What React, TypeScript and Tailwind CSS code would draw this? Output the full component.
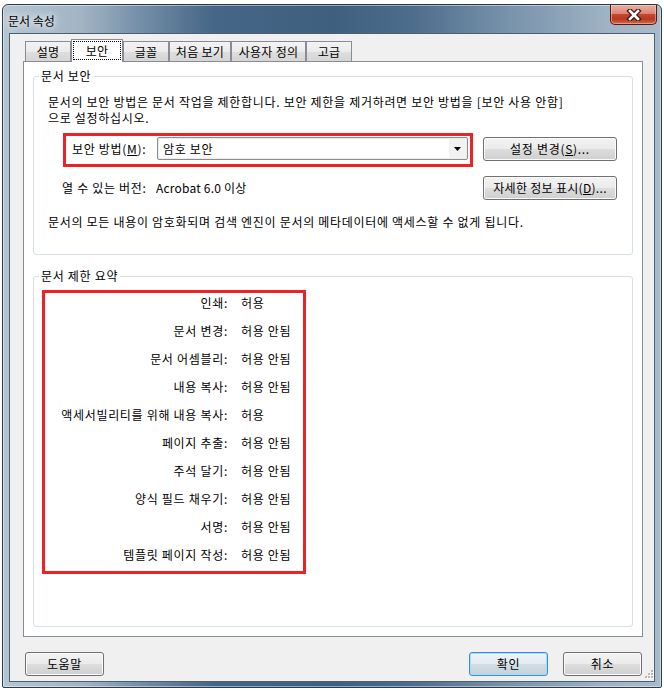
import React from 'react';

const rows: [string, string][] = [
  ['인쇄:', '허용'],
  ['문서 변경:', '허용 안됨'],
  ['문서 어셈블리:', '허용 안됨'],
  ['내용 복사:', '허용 안됨'],
  ['액세서빌리티를 위해 내용 복사:', '허용'],
  ['페이지 추출:', '허용 안됨'],
  ['주석 달기:', '허용 안됨'],
  ['양식 필드 채우기:', '허용 안됨'],
  ['서명:', '허용 안됨'],
  ['템플릿 페이지 작성:', '허용 안됨'],
];

const tabs = [
  { label: '설명', w: 'w-[46px]' },
  { label: '보안', w: 'w-[52px]', active: true },
  { label: '글꼴', w: 'w-[46px]' },
  { label: '처음 보기', w: 'w-[62px]' },
  { label: '사용자 정의', w: 'w-[75px]' },
  { label: '고급', w: 'w-[46px]' },
];

const Button: React.FC<{ children: React.ReactNode; className?: string; isDefault?: boolean }> = ({
  children,
  className = '',
  isDefault = false,
}) => (
  <div
    className={`flex h-[24px] items-center justify-center rounded-[3px] border leading-none ${
      isDefault
        ? 'border-[#3c8fd0] bg-[linear-gradient(180deg,#eef4f8_0%,#e3ecf2_48%,#d2dde5_52%,#c5d2db_100%)] shadow-[inset_0_0_0_1px_#a4dcf8]'
        : 'border-[#707070] bg-[linear-gradient(180deg,#f3f3f3_0%,#ebebeb_48%,#dddddd_52%,#cfcfcf_100%)] shadow-[inset_0_0_0_1px_#fbfbfb]'
    } ${className}`}
  >
    {children}
  </div>
);

export default function App() {
  return (
    <div className="min-h-screen bg-white pt-[4px] pl-[2px] font-['Noto_Sans_CJK_KR',sans-serif] text-[12px] tracking-[0.7px] text-black">
      <div className="flex h-[684px] w-[660px] flex-col rounded-t-[6px] rounded-b-[2px] border border-[#2a3b4d] bg-[linear-gradient(90deg,#b6c5d2_0%,#a1b4c4_12%,#6f8aa4_22%,#456686_32%,#3f5f7f_50%,#4d6d8c_62%,#7b95ad_78%,#9fb3c4_92%,#a8bbca_100%)] shadow-[inset_0_0_0_1px_rgba(255,255,255,0.45)]">
        {/* title bar */}
        <div className="flex h-[28px] items-start justify-between">
          <div className="pl-[5px] pt-[8px] leading-[16px] tracking-normal [text-shadow:0_0_6px_#ffffff,0_0_10px_#ffffff]">문서 속성</div>
          <div className="mr-[4px] flex h-[20px] w-[47px] items-center justify-center rounded-b-[5px] border border-t-0 border-[#571a12] bg-[linear-gradient(180deg,#eab0a4_0%,#dc8374_45%,#c6452f_50%,#b73a22_75%,#d66b4a_100%)] shadow-[inset_0_0_0_1px_rgba(255,220,210,0.45)]">
            <svg width="16" height="12" viewBox="0 0 16 12">
              <path d="M4 2 L12 10 M12 2 L4 10" stroke="#3b1510" strokeWidth="5" strokeLinecap="square" />
              <path d="M4 2 L12 10 M12 2 L4 10" stroke="#ffffff" strokeWidth="2.6" strokeLinecap="square" />
            </svg>
          </div>
        </div>

        {/* client area */}
        <div className="mx-[6px] mb-[5px] flex flex-1 flex-col border border-[#4b5e72] bg-[#f0f0f0] pl-[13px] pt-[5px]">
          {/* tabs */}
          <div className="mr-[11px] flex h-[22px] items-end pl-[2px] tracking-[0.3px]">
            {tabs.map(t =>
              t.active ? (
                <div
                  key={t.label}
                  className={`${t.w} relative z-10 -mb-px h-[23px] border border-b-0 border-[#898c95] bg-white p-[1px] pb-[2px]`}
                >
                  <div className="flex h-full items-start justify-center border border-dotted border-black pt-[1px] leading-[16px]">
                    {t.label}
                  </div>
                </div>
              ) : (
                <div
                  key={t.label}
                  className={`${t.w} flex h-[20px] items-center justify-center border border-b-0 border-[#898c95] bg-[linear-gradient(180deg,#f3f3f3_0%,#ebebeb_50%,#dedede_52%,#d5d5d5_100%)] pt-[1px] leading-[16px]`}
                >
                  {t.label}
                </div>
              ),
            )}
          </div>

          {/* panel */}
          <div className="mr-[11px] flex h-[576px] flex-col border border-[#898c95] bg-white px-[9px] pb-[9px] pt-[6px]">
            <fieldset className="rounded-[3px] border border-[#d5dfe5] pb-[24px]">
              <legend className="ml-[5px] px-[2px] leading-[16px]">문서 보안</legend>
              <div className="mt-[10px] pl-[14px] leading-[16px]">
                <div>문서의 보안 방법은 문서 작업을 제한합니다. 보안 제한을 제거하려면 보안 방법을 [보안 사용 안함]</div>
                <div>으로 설정하십시오.</div>
              </div>
              <div className="mt-[7px] flex items-start">
                <div className="ml-[29px] flex h-[34px] w-[410px] items-start border-[3px] border-[#ec2227] pl-[6px] pt-[1px]">
                  <div className="w-[85px] leading-[23px]">
                    보안 방법(<span className="underline">M</span>):
                  </div>
                  <div className="flex h-[23px] w-[311px] rounded-[2px] border border-[#8d8d8d] bg-[#ececec] p-[1px]">
                    <div className="flex flex-1 items-center bg-white pl-[4px] leading-[16px]">암호 보안</div>
                    <div className="flex w-[17px] items-center justify-center bg-[#f2f2f2]">
                      <svg width="7" height="4" viewBox="0 0 7 4">
                        <path d="M0 0 L7 0 L3.5 4 Z" fill="#000" />
                      </svg>
                    </div>
                  </div>
                </div>
                <Button className="ml-[10px] mt-[4px] w-[134px]">
                  설정 변경(<span className="underline">S</span>)...
                </Button>
              </div>
              <div className="mt-[9px] flex items-center pr-[15px]">
                <div className="ml-[28px] w-[94px] whitespace-nowrap leading-[16px]">열 수 있는 버전:</div>
                <div className="leading-[16px] tracking-[0.2px]">Acrobat 6.0 이상</div>
                <Button className="ml-auto w-[134px] tracking-[0.3px]">
                  자세한 정보 표시(<span className="underline">D</span>)...
                </Button>
              </div>
              <div className="mt-[14px] pl-[14px] leading-[16px]">
                문서의 모든 내용이 암호화되며 검색 엔진이 문서의 메타데이터에 액세스할 수 없게 됩니다.
              </div>
            </fieldset>

            <fieldset className="mt-[13px] flex-1 rounded-[3px] border border-[#d5dfe5]">
              <legend className="ml-[5px] px-[2px] leading-[16px]">문서 제한 요약</legend>
              <div className="ml-[8px] mt-[6px] flex w-[264px] flex-col gap-[12px] border-[3px] border-[#ec2227] pb-[8px] pt-[2px]">
                {rows.map(([label, value]) => (
                  <div key={label} className="flex leading-[16px]">
                    <div className="w-[183px] whitespace-nowrap text-right">{label}</div>
                    <div className="ml-[13px] whitespace-nowrap">{value}</div>
                  </div>
                ))}
              </div>
            </fieldset>
          </div>

          {/* bottom buttons */}
          <div className="mt-[15px] flex items-end pl-[2px]">
            <Button className="mb-[5px] w-[79px]">도움말</Button>
            <Button isDefault className="mb-[5px] ml-auto w-[79px]">
              확인
            </Button>
            <Button className="mb-[5px] ml-[15px] w-[79px]">취소</Button>
            <div className="ml-[2px] h-[12px] w-[10px] self-end pb-[1px]">
              <svg width="10" height="11" viewBox="0 0 10 11">
                {[
                  [7, 1],
                  [4, 4],
                  [7, 4],
                  [1, 7],
                  [4, 7],
                  [7, 7],
                ].map(([x, y]) => (
                  <g key={`${x}-${y}`}>
                    <rect x={x + 1} y={y + 1} width="2" height="2" fill="#ffffff" />
                    <rect x={x} y={y} width="2" height="2" fill="#b8b8b8" />
                  </g>
                ))}
              </svg>
            </div>
          </div>
        </div>
      </div>
    </div>
  );
}
